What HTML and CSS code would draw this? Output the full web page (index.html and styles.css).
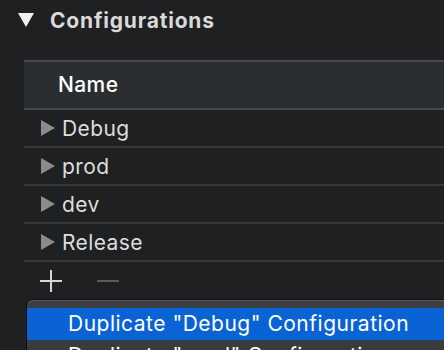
FILE: index.html
```html
<!DOCTYPE html>
<html lang="en">
<head>
    <meta charset="UTF-8">
    <title>Configurations</title>
    <link rel="stylesheet" href="styles.css">
</head>
<body>
    <div class="section-title">
        <span class="disclosure-open"></span>
        <h2>Configurations</h2>
    </div>

    <div class="config-table">
        <div class="table-header">Name</div>
        <div class="table-row"><span class="disclosure"></span>Debug</div>
        <div class="table-row"><span class="disclosure"></span>prod</div>
        <div class="table-row"><span class="disclosure"></span>dev</div>
        <div class="table-row"><span class="disclosure"></span>Release</div>
    </div>

    <div class="toolbar">
        <svg class="tool-icon" width="24" height="24" viewBox="0 0 24 24">
            <path d="M12 1v22M1 12h22" stroke="#d6d6d6" stroke-width="2"/>
        </svg>
        <svg class="tool-icon" width="24" height="24" viewBox="0 0 24 24">
            <path d="M1 12h22" stroke="#5a5b5d" stroke-width="2"/>
        </svg>
    </div>

    <div class="menu">
        <div class="menu-item selected">Duplicate "Debug" Configuration</div>
        <div class="menu-item">Duplicate "prod" Configuration</div>
    </div>
</body>
</html>
```

FILE: styles.css
```css
html, body {
    height: 100%;
}
body {
    margin: 0;
    background-color: #1f2022;
    font-family: Inter, "Noto Sans", sans-serif;
    overflow: hidden;
}
.section-title {
    display: flex;
    align-items: center;
    gap: 16px;
    height: 40px;
    padding-left: 18px;
}
.section-title h2 {
    margin: 0;
    font-size: 21px;
    font-weight: 700;
    letter-spacing: 0.8px;
    color: #d9d9d9;
}
.disclosure-open {
    width: 0;
    height: 0;
    border-left: 8px solid transparent;
    border-right: 8px solid transparent;
    border-top: 14px solid #f0f0f0;
}
.config-table {
    margin-left: 24px;
    margin-top: 20px;
}
.table-header {
    height: 46px;
    line-height: 46px;
    padding-left: 34px;
    background-color: #2b2e31;
    border-top: 2px solid #47484a;
    border-bottom: 2px solid #47484a;
    color: #ffffff;
    font-size: 21px;
    font-weight: 500;
    letter-spacing: 0.4px;
}
.table-row {
    display: flex;
    align-items: center;
    height: 36px;
    padding-left: 17px;
    border-bottom: 2px solid #37383a;
    color: #dddddd;
    font-size: 21px;
    letter-spacing: 0.4px;
}
.disclosure {
    width: 0;
    height: 0;
    margin-right: 7px;
    border-top: 8px solid transparent;
    border-bottom: 8px solid transparent;
    border-left: 14px solid #8b8b8b;
}
.toolbar {
    display: flex;
    align-items: center;
    gap: 33px;
    height: 37px;
    padding-left: 39px;
}
.menu {
    margin-left: 26px;
    margin-right: -20px;
    padding-top: 8px;
    background: linear-gradient(#3e3f42, #38393c);
    border: 1px solid #0f0f10;
    border-radius: 7px 7px 0 0;
    box-shadow: inset 0 1px 0 #5a5b5d;
}
.menu-item {
    height: 32px;
    line-height: 32px;
    padding-left: 41px;
    color: #ffffff;
    font-size: 21px;
    letter-spacing: 0.5px;
}
.menu-item.selected {
    background-color: #0a63d4;
}
```
